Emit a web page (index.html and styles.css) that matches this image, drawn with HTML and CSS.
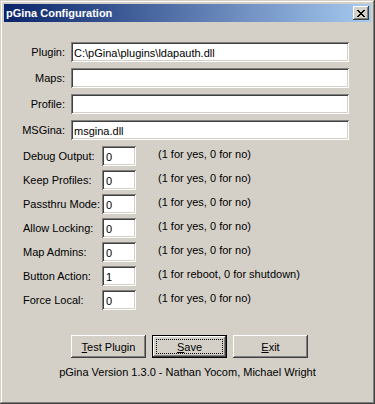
FILE: index.html
```html
<!DOCTYPE html>
<html lang="en">
<head>
    <meta charset="UTF-8">
    <title>pGina Configuration</title>
    <link rel="stylesheet" href="styles.css">
</head>
<body>

<div class="window">
    <div class="titlebar">
        <span class="title">pGina Configuration</span>
        <div class="close-btn">
            <svg width="8" height="7" viewBox="0 0 8 7">
                <path d="M0 0h2v1h1v1h2v-1h1v-1h2v1h-1v1h-1v1h-1v1h1v1h1v1h1v1h-2v-1h-1v-1h-2v1h-1v1h-2v-1h1v-1h1v-1h1v-1h-1v-1h-1v-1h-1z" fill="#000"/>
            </svg>
        </div>
    </div>

    <div class="content">
        <div class="paths">
            <div class="path-row">
                <label class="path-label">Plugin:</label>
                <input class="field wide" type="text" value="C:\pGina\plugins\ldapauth.dll">
            </div>
            <div class="path-row">
                <label class="path-label">Maps:</label>
                <input class="field wide" type="text" value="">
            </div>
            <div class="path-row">
                <label class="path-label">Profile:</label>
                <input class="field wide" type="text" value="">
            </div>
            <div class="path-row">
                <label class="path-label">MSGina:</label>
                <input class="field wide" type="text" value="msgina.dll">
            </div>
        </div>

        <div class="options">
            <div class="opt-row">
                <label class="opt-label">Debug Output:</label>
                <input class="field small" type="text" value="0">
                <span class="hint">(1 for yes, 0 for no)</span>
            </div>
            <div class="opt-row">
                <label class="opt-label">Keep Profiles:</label>
                <input class="field small" type="text" value="0">
                <span class="hint">(1 for yes, 0 for no)</span>
            </div>
            <div class="opt-row">
                <label class="opt-label">Passthru Mode:</label>
                <input class="field small" type="text" value="0">
                <span class="hint">(1 for yes, 0 for no)</span>
            </div>
            <div class="opt-row">
                <label class="opt-label">Allow Locking:</label>
                <input class="field small" type="text" value="0">
                <span class="hint">(1 for yes, 0 for no)</span>
            </div>
            <div class="opt-row">
                <label class="opt-label">Map Admins:</label>
                <input class="field small" type="text" value="0">
                <span class="hint">(1 for yes, 0 for no)</span>
            </div>
            <div class="opt-row">
                <label class="opt-label">Button Action:</label>
                <input class="field small" type="text" value="1">
                <span class="hint">(1 for reboot, 0 for shutdown)</span>
            </div>
            <div class="opt-row">
                <label class="opt-label">Force Local:</label>
                <input class="field small" type="text" value="0">
                <span class="hint">(1 for yes, 0 for no)</span>
            </div>
        </div>

        <div class="actions">
            <button class="btn"><u>T</u>est Plugin</button>
            <button class="btn default"><span class="focus"><u>S</u>ave</span></button>
            <button class="btn"><u>E</u>xit</button>
        </div>

        <div class="version">pGina Version 1.3.0 - Nathan Yocom, Michael Wright</div>
    </div>
</div>

</body>
</html>
```

FILE: styles.css
```css
body {
    margin: 0;
    font-family: "Liberation Sans", Arial, sans-serif;
    font-size: 11px;
    color: #000;
}
.window {
    width: 375px;
    height: 404px;
    box-sizing: border-box;
    padding: 4px;
    background-color: #d4d0c8;
    box-shadow: inset -1px -1px #404040, inset 1px 1px #d4d0c8,
                inset -2px -2px #808080, inset 2px 2px #fff;
}
.titlebar {
    height: 18px;
    display: flex;
    align-items: center;
    justify-content: space-between;
    padding: 0 2px 0 2px;
    background: linear-gradient(to right, #0a246a, #a6caf0);
}
.title {
    color: #fff;
    font-weight: bold;
    font-size: 11px;
}
.close-btn {
    width: 16px;
    height: 14px;
    display: flex;
    align-items: center;
    justify-content: center;
    background-color: #d4d0c8;
    box-shadow: inset -1px -1px #404040, inset 1px 1px #fff,
                inset -2px -2px #808080, inset 2px 2px #d4d0c8;
}
.content {
    padding-top: 20px;
}
.paths {
    display: flex;
    flex-direction: column;
    gap: 6px;
}
.path-row {
    display: flex;
    align-items: center;
}
.path-label {
    width: 61px;
    margin-right: 6px;
    text-align: right;
}
.field {
    height: 20px;
    box-sizing: border-box;
    border: none;
    outline: none;
    margin: 0;
    font-family: inherit;
    font-size: 11px;
    color: #000;
    background-color: #fff;
    box-shadow: inset 1px 1px #808080, inset -1px -1px #fff,
                inset 2px 2px #404040, inset -2px -2px #d4d0c8;
}
.field.wide {
    width: 278px;
    padding: 1px 3px 0 3px;
}
.field.small {
    width: 34px;
    padding: 2px 4px 0 4px;
}
.options {
    margin-top: 6px;
    padding-left: 19px;
    display: flex;
    flex-direction: column;
    gap: 4px;
}
.opt-row {
    display: flex;
    align-items: center;
}
.opt-label {
    width: 79px;
}
.hint {
    align-self: flex-start;
    margin-left: 22px;
    line-height: 14px;
    padding-top: 1px;
}
.actions {
    margin-top: 25px;
    padding-left: 67px;
    display: flex;
    gap: 6px;
}
.btn {
    width: 75px;
    height: 23px;
    border: none;
    padding: 0;
    font-family: inherit;
    font-size: 11px;
    color: #000;
    background-color: #d4d0c8;
    box-shadow: inset -1px -1px #404040, inset 1px 1px #fff,
                inset -2px -2px #808080, inset 2px 2px #d4d0c8;
}
.btn.default {
    border: 1px solid #000;
    box-shadow: inset -1px -1px #404040, inset 1px 1px #fff,
                inset -2px -2px #808080;
    display: flex;
    padding: 3px;
}
.focus {
    flex: 1;
    display: flex;
    align-items: center;
    justify-content: center;
    border: 1px dotted #000;
}
.version {
    margin-top: 8px;
    text-align: center;
    line-height: 13px;
}
```
